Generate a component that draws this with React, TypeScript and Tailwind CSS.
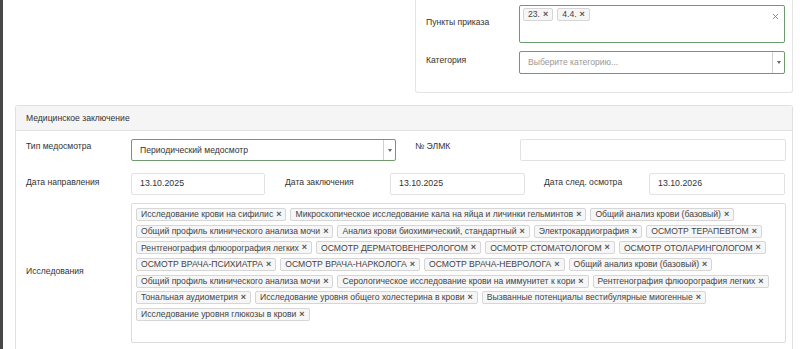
import { X } from 'lucide-react';

const studies = [
  'Исследование крови на сифилис',
  'Микроскопическое исследование кала на яйца и личинки гельминтов',
  'Общий анализ крови (базовый)',
  'Общий профиль клинического анализа мочи',
  'Анализ крови биохимический, стандартный',
  'Электрокардиография',
  'ОСМОТР ТЕРАПЕВТОМ',
  'Рентгенография флюорография легких',
  'ОСМОТР ДЕРМАТОВЕНЕРОЛОГОМ',
  'ОСМОТР СТОМАТОЛОГОМ',
  'ОСМОТР ОТОЛАРИНГОЛОГОМ',
  'ОСМОТР ВРАЧА-ПСИХИАТРА',
  'ОСМОТР ВРАЧА-НАРКОЛОГА',
  'ОСМОТР ВРАЧА-НЕВРОЛОГА',
  'Общий анализ крови (базовый)',
  'Общий профиль клинического анализа мочи',
  'Серологическое исследование крови на иммунитет к кори',
  'Рентгенография флюорография легких',
  'Тональная аудиометрия',
  'Исследование уровня общего холестерина в крови',
  'Вызванные потенциалы вестибулярные миогенные',
  'Исследование уровня глюкозы в крови',
];

const Tag = ({ label }: { label: string }) => (
  <span className="flex h-[13px] items-center gap-[3px] rounded-[2px] border border-[#d6d6d6] bg-[#f6f6f6] px-[4px] text-[8.6px] leading-none whitespace-nowrap text-[#444]">
    {label}
    <span className="text-[9px] font-bold text-[#555]">×</span>
  </span>
);

// tiny caret used by the select boxes
const Caret = () => (
  <span className="flex w-[12px] items-center justify-center border-l border-[#d0d0d0]">
    <svg width="4" height="3" viewBox="0 0 4 3">
      <path d="M0 0h4L2 3z" fill="#666" />
    </svg>
  </span>
);

const Label = ({ children, w = 'w-[105px]', mb = 'mb-[4px]' }: { children: React.ReactNode; w?: string; mb?: string }) => (
  <span className={`${w} ${mb} shrink-0 text-[8.6px] text-[#333]`}>{children}</span>
);

const TextBox = ({ value, w }: { value?: string; w: string }) => (
  <div className={`${w} flex h-[22px] shrink-0 items-center rounded-[2px] border border-[#e2e2e2] pl-[8px] text-[8.8px] text-[#333]`}>
    {value}
  </div>
);

export default function App() {
  return (
    <div className="flex h-[349px] w-[800px] overflow-hidden bg-white font-['Liberation_Sans',Arial,sans-serif]">
      <div className="w-[3px] shrink-0 bg-[#474747]" />
      <div className="flex flex-1 flex-col pl-[12px]">
        {/* Order panel, top cut off */}
        <div className="ml-[400px] h-[93px] w-[378px] shrink-0 rounded-b-[3px] border-x border-b border-[#e4e4e4] pt-[5px] pl-[10px] pr-[7px]">
          <div className="flex items-center">
            <Label w="w-[93px]">Пункты приказа</Label>
            <div className="flex h-[38px] flex-1 items-start justify-between rounded-[2px] border border-[#6f9c6f] px-[3px] pt-[2px]">
              <div className="flex gap-[4px]">
                <Tag label="23." />
                <Tag label="4.4." />
              </div>
              <X size={9} strokeWidth={2.2} className="mt-[4px] mr-[1px] text-[#777]" />
            </div>
          </div>
          <div className="mt-[8px] flex items-center">
            <Label w="w-[93px]">Категория</Label>
            <div className="flex h-[23px] flex-1 rounded-[2px] border border-[#6f9c6f]">
              <span className="flex flex-1 items-center pl-[8px] text-[8.6px] text-[#999]">Выберите категорию...</span>
              <Caret />
            </div>
          </div>
        </div>

        {/* Medical conclusion panel */}
        <div className="mt-[12px] w-[778px] flex-1 rounded-t-[3px] border border-b-0 border-[#e0e0e0]">
          <div className="flex h-[25px] items-center border-b border-[#e2e2e2] bg-[#f5f5f5] pl-[10px] text-[8.6px] text-[#333]">
            Медицинское заключение
          </div>
          <div className="pl-[10px] pt-[8px]">
            <div className="flex items-center">
              <Label mb="mb-[7px]">Тип медосмотра</Label>
              <div className="flex h-[22px] w-[265px] rounded-[2px] border border-[#6f9c6f]">
                <span className="flex flex-1 items-center pl-[8px] text-[8.6px] text-[#333]">Периодический медосмотр</span>
                <Caret />
              </div>
              <span className="ml-[19px]" />
              <Label mb="mb-[7px]">№ ЭЛМК</Label>
              <TextBox w="w-[266px]" />
            </div>
            <div className="mt-[12px] flex items-center">
              <Label>Дата направления</Label>
              <TextBox w="w-[134px]" value="13.10.2025" />
              <span className="ml-[20px]" />
              <Label>Дата заключения</Label>
              <TextBox w="w-[135px]" value="13.10.2025" />
              <span className="ml-[19px]" />
              <Label>Дата след. осмотра</Label>
              <TextBox w="w-[136px]" value="13.10.2026" />
            </div>
            <div className="mt-[8px] flex items-center">
              <Label>Исследования</Label>
              <div className="flex h-[140px] w-[655px] flex-wrap content-start gap-x-[4px] gap-y-[3.67px] rounded-[2px] border border-[#dcdcdc] pl-[4px] pt-[4px]">
                {studies.map((s, i) => (
                  <Tag key={i} label={s} />
                ))}
              </div>
            </div>
          </div>
        </div>
      </div>
    </div>
  );
}
